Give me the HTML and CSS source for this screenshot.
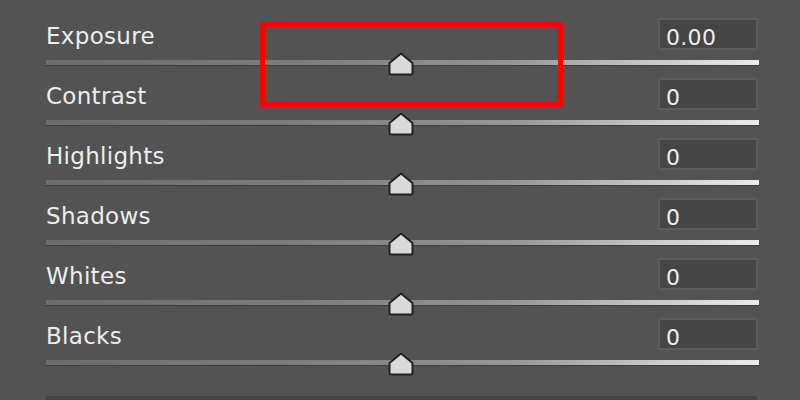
FILE: index.html
```html
<!DOCTYPE html>
<html>
<head>
<meta charset="utf-8">
<link rel="stylesheet" href="styles.css">
</head>
<body>
<div class="panel">
  <div class="row">
    <div class="head"><span class="label">Exposure</span><span class="value">0.00</span></div>
    <div class="track"><svg class="thumb" width="28" height="24" viewBox="0 0 28 24"><path d="M14 1.5 L25.5 11 L25.5 21 Q25.5 22.5 24 22.5 L4 22.5 Q2.5 22.5 2.5 21 L2.5 11 Z" fill="#d9d9d9" stroke="#222" stroke-width="2" stroke-linejoin="round"/></svg></div>
  </div>
  <div class="row">
    <div class="head"><span class="label">Contrast</span><span class="value">0</span></div>
    <div class="track"><svg class="thumb" width="28" height="24" viewBox="0 0 28 24"><path d="M14 1.5 L25.5 11 L25.5 21 Q25.5 22.5 24 22.5 L4 22.5 Q2.5 22.5 2.5 21 L2.5 11 Z" fill="#d9d9d9" stroke="#222" stroke-width="2" stroke-linejoin="round"/></svg></div>
  </div>
  <div class="row">
    <div class="head"><span class="label">Highlights</span><span class="value">0</span></div>
    <div class="track"><svg class="thumb" width="28" height="24" viewBox="0 0 28 24"><path d="M14 1.5 L25.5 11 L25.5 21 Q25.5 22.5 24 22.5 L4 22.5 Q2.5 22.5 2.5 21 L2.5 11 Z" fill="#d9d9d9" stroke="#222" stroke-width="2" stroke-linejoin="round"/></svg></div>
  </div>
  <div class="row">
    <div class="head"><span class="label">Shadows</span><span class="value">0</span></div>
    <div class="track"><svg class="thumb" width="28" height="24" viewBox="0 0 28 24"><path d="M14 1.5 L25.5 11 L25.5 21 Q25.5 22.5 24 22.5 L4 22.5 Q2.5 22.5 2.5 21 L2.5 11 Z" fill="#d9d9d9" stroke="#222" stroke-width="2" stroke-linejoin="round"/></svg></div>
  </div>
  <div class="row">
    <div class="head"><span class="label">Whites</span><span class="value">0</span></div>
    <div class="track"><svg class="thumb" width="28" height="24" viewBox="0 0 28 24"><path d="M14 1.5 L25.5 11 L25.5 21 Q25.5 22.5 24 22.5 L4 22.5 Q2.5 22.5 2.5 21 L2.5 11 Z" fill="#d9d9d9" stroke="#222" stroke-width="2" stroke-linejoin="round"/></svg></div>
  </div>
  <div class="row">
    <div class="head"><span class="label">Blacks</span><span class="value">0</span></div>
    <div class="track"><svg class="thumb" width="28" height="24" viewBox="0 0 28 24"><path d="M14 1.5 L25.5 11 L25.5 21 Q25.5 22.5 24 22.5 L4 22.5 Q2.5 22.5 2.5 21 L2.5 11 Z" fill="#d9d9d9" stroke="#222" stroke-width="2" stroke-linejoin="round"/></svg></div>
  </div>
  <div class="divider"></div>
  <div class="highlight"></div>
</div>
</body>
</html>
```
FILE: styles.css
```css
html, body {
  margin: 0;
  padding: 0;
  background: #535353;
  width: 800px;
  height: 400px;
  overflow: hidden;
}
.panel {
  position: relative;
  margin-left: 46px;
  width: 713px;
  padding-top: 18px;
  font-family: "DejaVu Sans", Verdana, sans-serif;
}
.row {
  height: 60px;
  display: flex;
  flex-direction: column;
}
.head {
  height: 32px;
  display: flex;
  justify-content: space-between;
  align-items: center;
  padding-right: 1px;
}
.label {
  color: #ededed;
  font-size: 23px;
  letter-spacing: 0.3px;
  padding-top: 4px;
}
.value {
  box-sizing: border-box;
  width: 100px;
  height: 32px;
  background: #454545;
  border: 2px solid #5c5c5c;
  color: #ededed;
  font-size: 22px;
  padding-left: 6px;
  line-height: 30px;
  padding-top: 3px;
  letter-spacing: 0.3px;
}
.track {
  position: relative;
  margin-top: 10px;
  height: 5px;
  background: linear-gradient(to right, #6c6c6c 0%, #7d7d7d 35%, #959595 65%, #c8c8c8 85%, #ececec 100%);
  border-bottom: 1px solid #3e3e3e;
}
.thumb {
  position: absolute;
  left: 341px;
  top: -8px;
}
.divider {
  height: 4px;
  width: 711px;
  margin-top: 18px;
  background: #444444;
}
.highlight {
  position: absolute;
  left: 214px;
  top: 22px;
  width: 293px;
  height: 75px;
  border: 5px solid #ff0000;
  border-radius: 3px;
}
```
